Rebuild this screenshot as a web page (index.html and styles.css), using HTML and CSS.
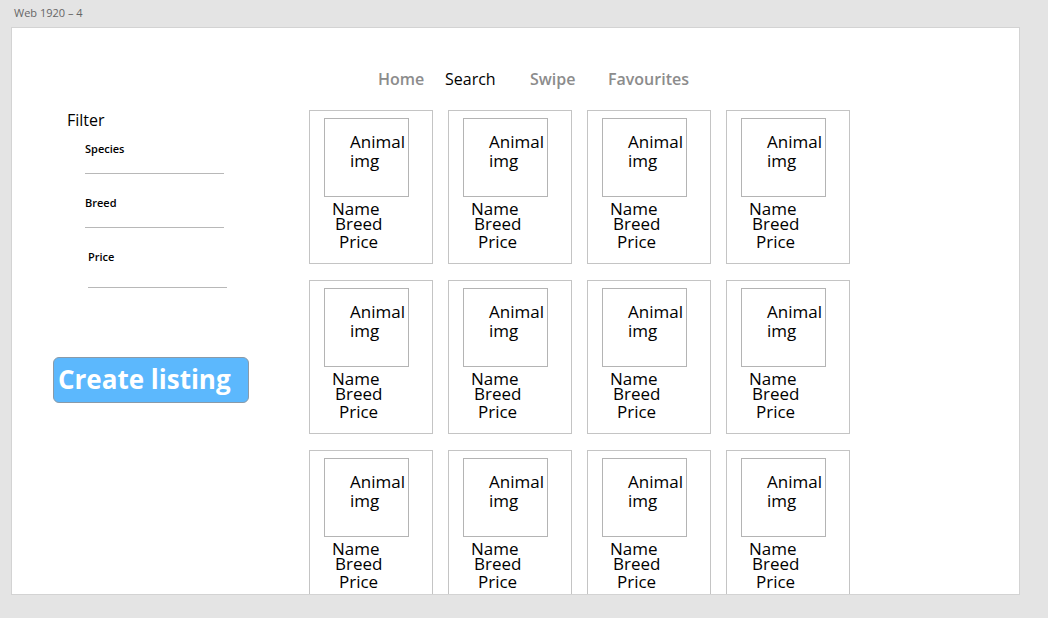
FILE: index.html
```html
<!DOCTYPE html>
<html>
<head>
<meta charset="utf-8">
<link rel="stylesheet" href="styles.css">
</head>
<body>
<div class="label">Web 1920 – 4</div>
<div class="board">
  <nav class="nav">
    <span class="nav-item home">Home</span>
    <span class="nav-item search active">Search</span>
    <span class="nav-item swipe">Swipe</span>
    <span class="nav-item fav">Favourites</span>
  </nav>
  <div class="content">
    <aside class="side">
      <div class="filter-title">Filter</div>
      <div class="field first"><div class="field-label">Species</div><div class="field-line"></div></div>
      <div class="field"><div class="field-label">Breed</div><div class="field-line"></div></div>
      <div class="field shift"><div class="field-label">Price</div><div class="field-line"></div></div>
      <button class="create">Create listing</button>
    </aside>
    <main class="grid">
      <div class="card"><div class="img"><span>Animal<br>img</span></div><div class="n">Name</div><div class="b">Breed</div><div class="p">Price</div></div>
      <div class="card"><div class="img"><span>Animal<br>img</span></div><div class="n">Name</div><div class="b">Breed</div><div class="p">Price</div></div>
      <div class="card"><div class="img"><span>Animal<br>img</span></div><div class="n">Name</div><div class="b">Breed</div><div class="p">Price</div></div>
      <div class="card"><div class="img"><span>Animal<br>img</span></div><div class="n">Name</div><div class="b">Breed</div><div class="p">Price</div></div>
      <div class="card"><div class="img"><span>Animal<br>img</span></div><div class="n">Name</div><div class="b">Breed</div><div class="p">Price</div></div>
      <div class="card"><div class="img"><span>Animal<br>img</span></div><div class="n">Name</div><div class="b">Breed</div><div class="p">Price</div></div>
      <div class="card"><div class="img"><span>Animal<br>img</span></div><div class="n">Name</div><div class="b">Breed</div><div class="p">Price</div></div>
      <div class="card"><div class="img"><span>Animal<br>img</span></div><div class="n">Name</div><div class="b">Breed</div><div class="p">Price</div></div>
      <div class="card"><div class="img"><span>Animal<br>img</span></div><div class="n">Name</div><div class="b">Breed</div><div class="p">Price</div></div>
      <div class="card"><div class="img"><span>Animal<br>img</span></div><div class="n">Name</div><div class="b">Breed</div><div class="p">Price</div></div>
      <div class="card"><div class="img"><span>Animal<br>img</span></div><div class="n">Name</div><div class="b">Breed</div><div class="p">Price</div></div>
      <div class="card"><div class="img"><span>Animal<br>img</span></div><div class="n">Name</div><div class="b">Breed</div><div class="p">Price</div></div>
    </main>
  </div>
</div>
</body>
</html>
```

FILE: styles.css
```css
html, body {
  margin: 0;
  padding: 0;
  background: #e4e4e4;
  font-family: "Open Sans", "DejaVu Sans", sans-serif;
  color: #000;
  overflow: hidden;
}
.label {
  height: 27px;
  padding: 5px 0 0 14px;
  box-sizing: border-box;
  font-family: "Open Sans", sans-serif;
  font-size: 11px;
  color: #666;
}
.board {
  margin-left: 11px;
  width: 1009px;
  height: 568px;
  box-sizing: border-box;
  background: #fff;
  border: 1px solid #d3d3d3;
  overflow: hidden;
}
.nav {
  display: flex;
  height: 82px;
  padding: 40px 0 0 366px;
  box-sizing: border-box;
  font-size: 16px;
  font-weight: 600;
  line-height: 22px;
}
.nav-item { color: #8c8c8c; }
.nav-item.active { color: #000; font-weight: 500; }
.home { width: 67px; }
.search { width: 85px; }
.swipe { width: 78px; }
.content {
  display: flex;
}
.side {
  width: 297px;
  padding: 0 0 0 41px;
  box-sizing: border-box;
}
.filter-title {
  font-size: 16px;
  font-weight: 500;
  line-height: 20px;
  margin: 0 0 0 14px;
}
.field {
  margin-left: 32px;
  width: 139px;
}
.field.shift { margin-left: 35px; }
.field-label {
  font-size: 11px;
  font-weight: 600;
  line-height: 14px;
  margin-top: 22px;
}
.field.first .field-label { margin-top: 12px; }
.field-line {
  height: 1px;
  background: #b8b8b8;
  margin-top: 17px;
}
.field.shift .field-line { margin-top: 23px; }
.create {
  margin-top: 69px;
  width: 196px;
  height: 46px;
  background: #5cb8fd;
  border: 1px solid #8a9aa8;
  border-radius: 6px;
  color: #fff;
  font-family: "Open Sans", sans-serif;
  font-size: 26px;
  font-weight: 700;
  text-align: left;
  padding: 0 0 3px 4px;
  line-height: 40px;
}
.grid {
  display: grid;
  grid-template-columns: repeat(4, 124px);
  grid-auto-rows: 154px;
  column-gap: 15px;
  row-gap: 16px;
}
.card {
  border: 1px solid #c4c4c4;
  box-sizing: border-box;
  font-size: 17px;
  font-weight: 500;
  line-height: 15px;
}
.img {
  margin: 7px 0 0 14px;
  width: 85px;
  height: 79px;
  box-sizing: border-box;
  border: 1px solid #b4b4b4;
  padding: 13px 0 0 25px;
  line-height: 19px;
}
.n { margin: 4px 0 0 22px; }
.b { margin: 0 0 0 25px; }
.p { margin: 3px 0 0 29px; }
```
